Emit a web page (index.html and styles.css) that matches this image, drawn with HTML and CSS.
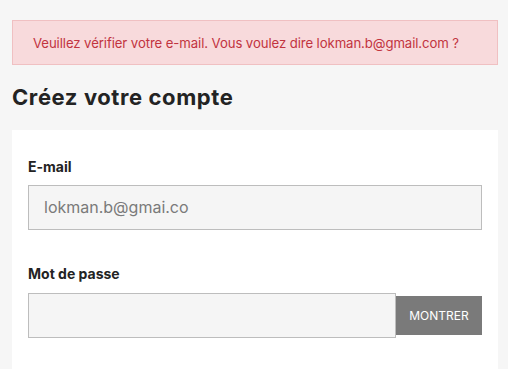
FILE: index.html
```html
<!DOCTYPE html>
<html lang="fr">
<head>
<meta charset="utf-8">
<link rel="stylesheet" href="styles.css">
</head>
<body>
<div class="page">
  <div class="alert">Veuillez vérifier votre e-mail. Vous voulez dire lokman.b@gmail.com ?</div>
  <h1 class="title">Créez votre compte</h1>
  <div class="card">
    <div class="field">
      <label class="label">E-mail</label>
      <div class="input email">lokman.b@gmai.co</div>
    </div>
    <div class="field">
      <label class="label">Mot de passe</label>
      <div class="pwrow">
        <div class="input pw"></div>
        <button class="show">MONTRER</button>
      </div>
    </div>
  </div>
</div>
</body>
</html>
```
FILE: styles.css
```css
html, body { margin: 0; padding: 0; }
body {
  background: #f6f6f6;
  font-family: Inter, "Noto Sans", sans-serif;
  color: #232323;
  width: 508px;
  height: 369px;
  overflow: hidden;
}
.page { padding: 20px 10px 0 12px; }
.alert {
  box-sizing: border-box;
  height: 45px;
  background: #f8dadc;
  border: 1px solid #f0c0c2;
  color: #c2343f;
  font-size: 13.2px;
  line-height: 16px;
  padding: 14px 20px 0 20px;
  letter-spacing: -0.1px;
}
.title {
  margin: 19px 0 0 0;
  font-size: 22px;
  font-weight: 700;
  line-height: 26px;
  letter-spacing: 0.6px;
}
.card {
  margin-top: 20px;
  background: #fff;
  padding: 28px 16px 32px 16px;
}
.field { display: flex; flex-direction: column; }
.field + .field { margin-top: 35px; }
.label { font-size: 14px; font-weight: 700; line-height: 17px; margin-bottom: 10px; }
.field + .field .label { margin-bottom: 11px; }
.input {
  box-sizing: border-box;
  background: #f5f5f5;
  border: 1px solid #bdbdbd;
  height: 45px;
}
.email { color: #7a7a7a; font-size: 16px; line-height: 19px; padding: 12px 15px; }
.pwrow { display: flex; align-items: center; }
.pw { width: 368px; }
.show {
  width: 86px;
  height: 39px;
  border: 0;
  background: #7a7a7a;
  color: #fff;
  font-family: Inter, sans-serif;
  font-size: 12px;
  padding: 0;
}
```
